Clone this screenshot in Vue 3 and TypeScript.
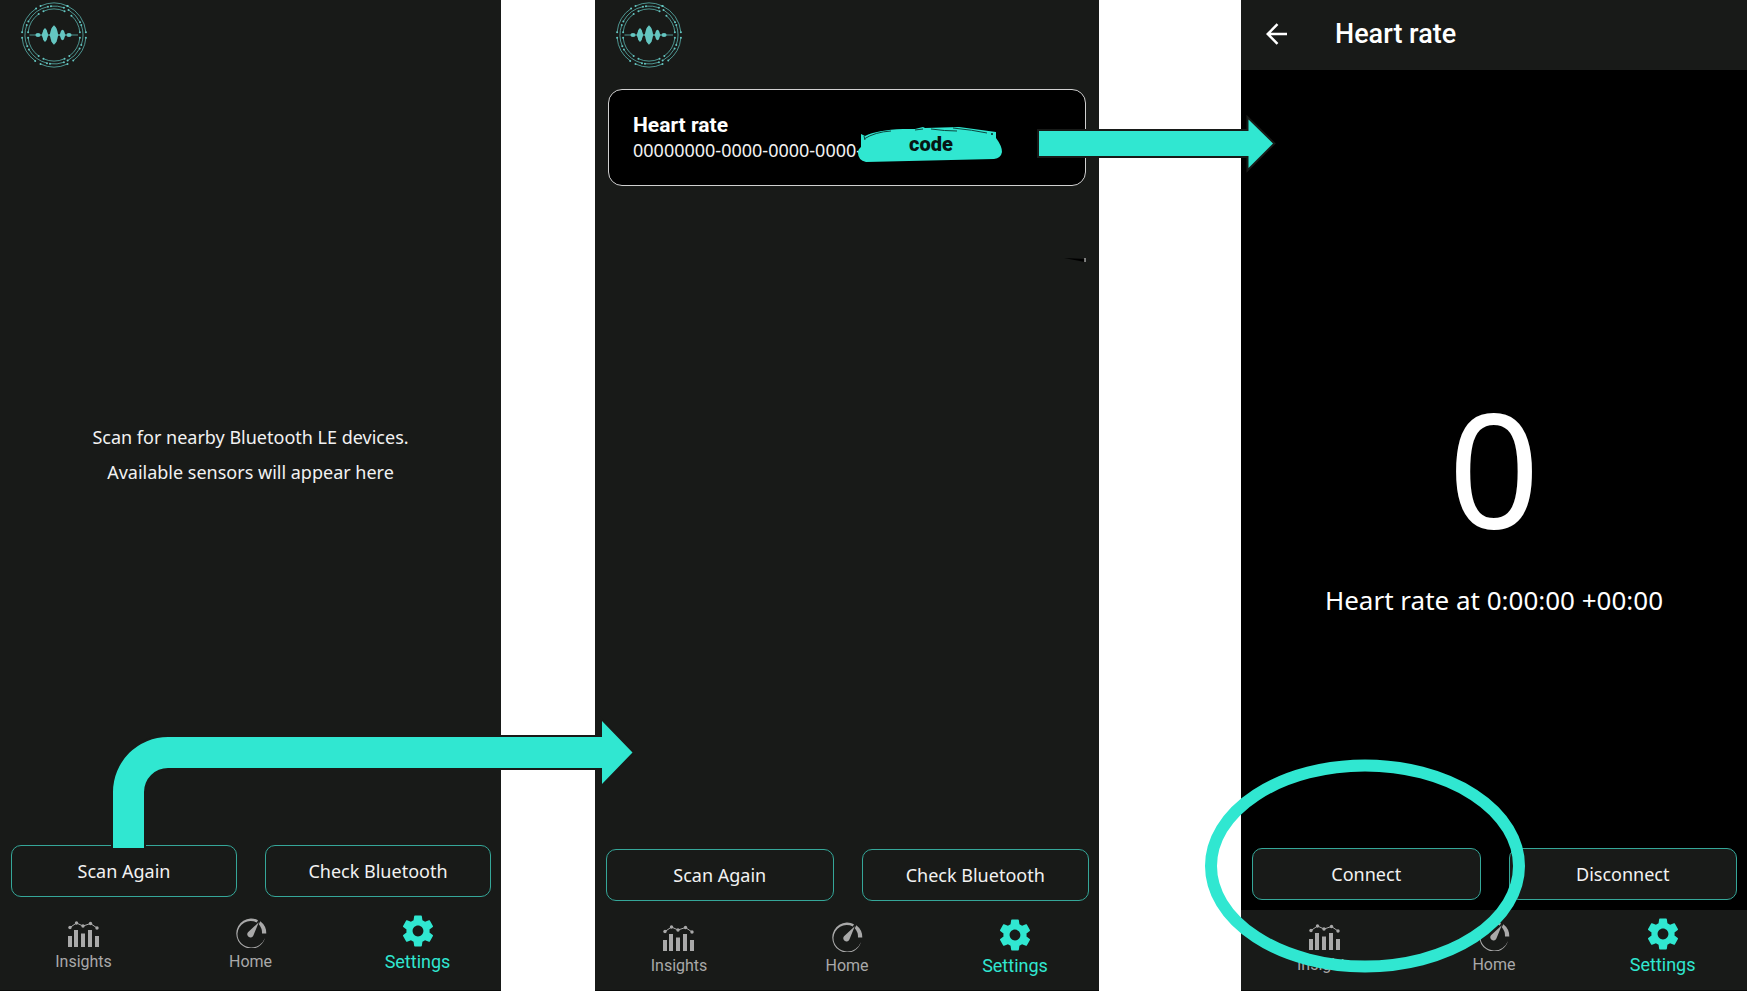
<script setup lang="ts">
type IconName = 'insights' | 'home' | 'settings'

interface Tab {
  icon: IconName
  label: string
}

type Screen = 'scan' | 'results' | 'reading'

interface Panel {
  id: Screen
  actions: string[]
}

const tabs: Tab[] = [
  { icon: 'insights', label: 'Insights' },
  { icon: 'home', label: 'Home' },
  { icon: 'settings', label: 'Settings' },
]

const panels: Panel[] = [
  { id: 'scan', actions: ['Scan Again', 'Check Bluetooth'] },
  { id: 'results', actions: ['Scan Again', 'Check Bluetooth'] },
  { id: 'reading', actions: ['Connect', 'Disconnect'] },
]

interface Dot {
  x: number
  y: number
}

const polar = (r: number, deg: number): Dot => ({
  x: 33 + r * Math.cos((deg * Math.PI) / 180),
  y: 33 + r * Math.sin((deg * Math.PI) / 180),
})

const arc = (r: number, from: number, to: number): string => {
  const a = polar(r, from)
  const b = polar(r, to)
  return `M${a.x.toFixed(2)} ${a.y.toFixed(2)}A${r} ${r} 0 0 1 ${b.x.toFixed(2)} ${b.y.toFixed(2)}`
}

// The ring is made of arcs whose ends carry small dots.
const ringSpans: [number, number, number][] = [
  [32, -65, -5], [32, 5, 53], [32, 65, 115], [32, 126, 175],
  [32, 185, 236], [32, 245, 295],
  [29, -60, -26], [29, -20, 20], [29, 28, 62], [29, 70, 98],
  [29, 104, 150], [29, 157, 200], [29, 208, 258], [29, 264, 290],
  [26, -48, -6], [26, 6, 54], [26, 66, 114], [26, 126, 174],
  [26, 186, 234], [26, 246, 294],
]
const ringPath = ringSpans.map(([r, a, b]) => arc(r, a, b)).join('')
const ringDots = ringSpans.flatMap(([r, a, b]) => [polar(r, a), polar(r, b)])
</script>

<template>
  <div class="board">
    <section v-for="panel in panels" :key="panel.id" class="panel" :class="panel.id">
      <header v-if="panel.id === 'reading'" class="titlebar">
        <button class="back" type="button" aria-label="Back">
          <svg viewBox="0 0 22 22" aria-hidden="true">
            <path d="M21 11H2M11.500 1.200L1.700 11l9.800 9.800" fill="none" stroke="#fff" stroke-width="2.500" />
          </svg>
        </button>
        <h1>Heart rate</h1>
      </header>
      <header v-else class="brand">
        <svg class="logo" viewBox="0 0 66 66" role="img" aria-label="Sound wave logo">
          <g fill="none" stroke="#5fbdb8" stroke-opacity="0.75">
            <path :d="ringPath" />
            <path d="M8.500 33H57" />
          </g>
          <g fill="#64c6c1">
            <circle v-for="(dot, i) in ringDots" :key="i" :cx="dot.x" :cy="dot.y" r="1" />
            <path d="M33 23c2 3.500 2.500 8 5 10-2.500 2-3 6.500-5 10-2-3.500-2.500-8-5-10 2.500-2 3-6.500 5-10z" />
            <path d="M24 26c1.600 2 1.800 5 3.600 7-1.800 2-2 5-3.600 7-1.600-2-1.800-5-3.600-7 1.800-2 2-5 3.600-7z" />
            <path d="M41.500 27.500c1.400 2 1.600 4 3.400 5.500-1.800 1.500-2 3.500-3.400 5.500-1.400-2-1.600-4-3.400-5.500 1.800-1.500 2-3.500 3.400-5.500z" />
            <ellipse cx="33" cy="33" rx="3.800" ry="9" />
            <ellipse cx="24" cy="33" rx="2.600" ry="6.500" />
            <ellipse cx="41.500" cy="33" rx="2.200" ry="5" />
            <ellipse cx="17" cy="33" rx="2.600" ry="2" />
            <ellipse cx="48" cy="33" rx="2.600" ry="2" />
          </g>
        </svg>
      </header>

      <main v-if="panel.id === 'scan'" class="content empty">
        <p>Scan for nearby Bluetooth LE devices.</p>
        <p>Available sensors will appear here</p>
      </main>

      <main v-else-if="panel.id === 'results'" class="content list">
        <article class="card">
          <h2>Heart rate</h2>
          <p>00000000-0000-0000-0000-</p>
          <div class="patch">
            <svg viewBox="0 0 146 38" preserveAspectRatio="none" aria-hidden="true">
              <path d="M4 8l4 2Q20 4 46 3l12 0 8-2 2 1 34-1 37 5v6q6 8 6 14-1 6-8 7L9 36Q1 34 1 27q0-4 3-6z" fill="#30e7d1" />
              <path d="M7 13Q18 6 34 5M58 4l8-1M74 3q14 2 26 2M96 2q20 2 34 5M7 10l1 4" fill="none" stroke="#0b4740" stroke-width="1" />
              <circle cx="135" cy="8" r="1" fill="#06211e" />
            </svg>
            <span>code</span>
          </div>
        </article>
      </main>

      <main v-else class="content reading-body">
        <p class="value">0</p>
        <p class="caption">Heart rate at 0:00:00 +00:00</p>
      </main>

      <div class="actions">
        <button v-for="action in panel.actions" :key="action" type="button">{{ action }}</button>
      </div>

      <nav class="tabs">
        <a v-for="tab in tabs" :key="tab.icon" href="#" :class="{ active: tab.icon === 'settings' }">
          <svg v-if="tab.icon === 'insights'" viewBox="0 0 34 34" aria-hidden="true">
            <g fill="currentColor">
              <path d="M1 22h4v11H1zM7 16h4v17H7zM14 19.500h4V33h-4zM21 16h4v17h-4zM28 22h4v11h-4z" />
              <circle cx="3" cy="13.500" r="1.700" />
              <circle cx="9.500" cy="9" r="1.700" />
              <circle cx="16" cy="12" r="1.700" />
              <circle cx="23.500" cy="9.500" r="1.700" />
              <circle cx="30" cy="14" r="1.700" />
            </g>
            <path d="M3 13.500L9.500 9l6.500 3 7.500-2.500L30 14" fill="none" stroke="currentColor" />
          </svg>
          <svg v-else-if="tab.icon === 'home'" viewBox="0 0 34 34" aria-hidden="true">
            <g fill="currentColor">
              <path d="M24 6.200A15 15 0 1 0 24 33A15.500 15.500 0 0 0 31 24A14.600 14.600 0 0 1 17 33.500A13.500 13.500 0 0 1 3.500 19.500A13.300 13.300 0 0 1 22.800 8.500z" />
              <path d="M26.300 7.200A15 15 0 0 1 32.300 19.500H28A13 13 0 0 0 24.800 10.300z" />
              <path d="M24.800 8.200L19.500 21.200A3.200 3.200 0 1 1 14 18.200z" />
            </g>
          </svg>
          <svg v-else viewBox="1 1 22 22" aria-hidden="true">
            <path
              fill="currentColor"
              d="M19.430 12.980c.04-.32.070-.64.070-.98s-.03-.66-.07-.98l2.110-1.650c.19-.15.240-.42.120-.64l-2-3.460c-.12-.22-.39-.3-.61-.22l-2.490 1c-.52-.4-1.080-.73-1.690-.98l-.38-2.650C14.460 2.180 14.250 2 14 2h-4c-.25 0-.46.180-.49.420l-.38 2.650c-.61.250-1.170.590-1.690.980l-2.490-1c-.23-.09-.49 0-.61.220l-2 3.460c-.13.220-.07.490.120.640l2.110 1.650c-.04.320-.07.650-.07.980s.03.660.070.980l-2.110 1.650c-.19.150-.24.420-.12.640l2 3.460c.12.220.39.300.61.220l2.490-1c.52.400 1.080.730 1.690.980l.38 2.650c.03.240.24.420.49.420h4c.25 0 .46-.18.490-.42l.38-2.650c.61-.25 1.170-.59 1.690-.98l2.490 1c.23.090.490 0 .61-.22l2-3.460c.12-.22.070-.49-.12-.64l-2.110-1.650zM12 15.500c-1.930 0-3.500-1.570-3.500-3.500s1.570-3.500 3.500-3.500 3.500 1.570 3.500 3.500-1.570 3.500-3.500 3.500z"
            />
          </svg>
          <span>{{ tab.label }}</span>
        </a>
      </nav>
    </section>

    <svg class="annotations" viewBox="0 0 1747 991" preserveAspectRatio="none" aria-hidden="true">
      <path
        d="M113 848V792A55 55 0 0 1 168 737H602V721L632.500 752.500L602 784V768H168A24 24 0 0 0 144 792V848z"
        fill="#30e7d1" stroke="#181a18" stroke-width="4" paint-order="stroke"
      />
      <path
        d="M1039 131H1248.500V119.500L1273 143.500L1248.500 168V156H1039z"
        fill="#30e7d1" stroke="#181a18" stroke-width="4" paint-order="stroke"
      />
      <ellipse cx="1365" cy="866" rx="154" ry="100.500" fill="none" stroke="#30e7d1" stroke-width="12" />
      <path d="M1064 258l21 1v3z" fill="#000" />
      <path d="M1085 258v4" stroke="#e8e8e8" />
    </svg>
  </div>
</template>

<style>
body {
  margin: 0;
  background: #fff;
}
</style>

<style scoped>
.board {
  position: relative;
  display: grid;
  grid-template-columns: 501fr 94fr 504fr 142fr 506fr;
  min-height: 100vh;
  overflow: hidden;
  font-family: "Noto Sans", "Open Sans", sans-serif;
  color: #f2f2f2;
}

h1,
h2,
p {
  margin: 0;
}

.panel {
  display: flex;
  flex-direction: column;
  min-width: 0;
  box-sizing: border-box;
  background: #181a18;
  border-bottom: 1px solid #0a0b0a;
}

.scan {
  grid-column: 1;
}

.results {
  grid-column: 3;
}

.reading {
  grid-column: 5;
  background: #000;
}

.brand {
  height: 70px;
  padding: 2px 21px 0;
  box-sizing: border-box;
}

.logo {
  display: block;
  width: 66px;
  height: 66px;
}

.titlebar {
  display: flex;
  align-items: center;
  gap: 47px;
  height: 70px;
  padding: 0 25px 2px;
  box-sizing: border-box;
  background: #181a18;
}

.back {
  padding: 0;
  border: 0;
  background: none;
  cursor: pointer;
}

.back svg {
  display: block;
  width: 22px;
  height: 22px;
}

h1 {
  font: 500 27px/32px Roboto, sans-serif;
  color: #fff;
}

.content {
  flex: 1;
  display: flex;
  flex-direction: column;
}

.empty {
  justify-content: center;
  padding-bottom: 5px;
  text-align: center;
  font-size: 18px;
  line-height: 35px;
}

.list {
  padding: 19px 13px;
}

.card {
  position: relative;
  padding: 23px 24px 22px;
  border: 1px solid #d0d0d0;
  border-radius: 14px;
  background: #000;
}

h2 {
  font: 700 21px/25px Roboto, sans-serif;
  color: #fff;
}

.card p {
  font-size: 18px;
  line-height: 25px;
  white-space: nowrap;
}

.patch {
  position: absolute;
  left: 52%;
  top: 36px;
  width: 146px;
  height: 38px;
  display: grid;
  place-items: center;
}

.patch > * {
  grid-area: 1 / 1;
}

.patch svg {
  width: 100%;
  height: 100%;
}

.patch span {
  padding: 0 0 2px 3px;
  font: 900 20px/24px Roboto, sans-serif;
  color: #071513;
}

.reading-body {
  justify-content: center;
  align-items: center;
  gap: 36px;
  padding-top: 86px;
  color: #fff;
}

.value {
  font-size: 160px;
  line-height: 160px;
}

.caption {
  font-size: 26px;
  line-height: 36px;
}

.actions {
  display: grid;
  grid-template-columns: 1fr 1fr;
  gap: 28px;
  padding: 0 10px 10px 11px;
}

.actions button {
  height: 52px;
  border: 1px solid #35a799;
  border-radius: 10px;
  background: #181a18;
  color: inherit;
  font: inherit;
  font-size: 18px;
  cursor: pointer;
}

.tabs {
  display: grid;
  grid-template-columns: repeat(3, 1fr);
  height: 79px;
  background: #181a18;
}

.scan .tabs {
  height: 83px;
}

.reading .tabs {
  height: 80px;
}

.tabs a {
  display: flex;
  flex-direction: column;
  align-items: center;
  gap: 4px;
  padding-top: 7px;
  color: #a9a9a9;
  font: 400 16px/20px Roboto, sans-serif;
  text-decoration: none;
}

.tabs svg {
  width: 34px;
  height: 34px;
}

.tabs .active {
  color: #30e7d1;
  font-size: 18px;
}

.annotations {
  position: absolute;
  inset: 0;
  width: 100%;
  height: 100%;
  pointer-events: none;
}
</style>
